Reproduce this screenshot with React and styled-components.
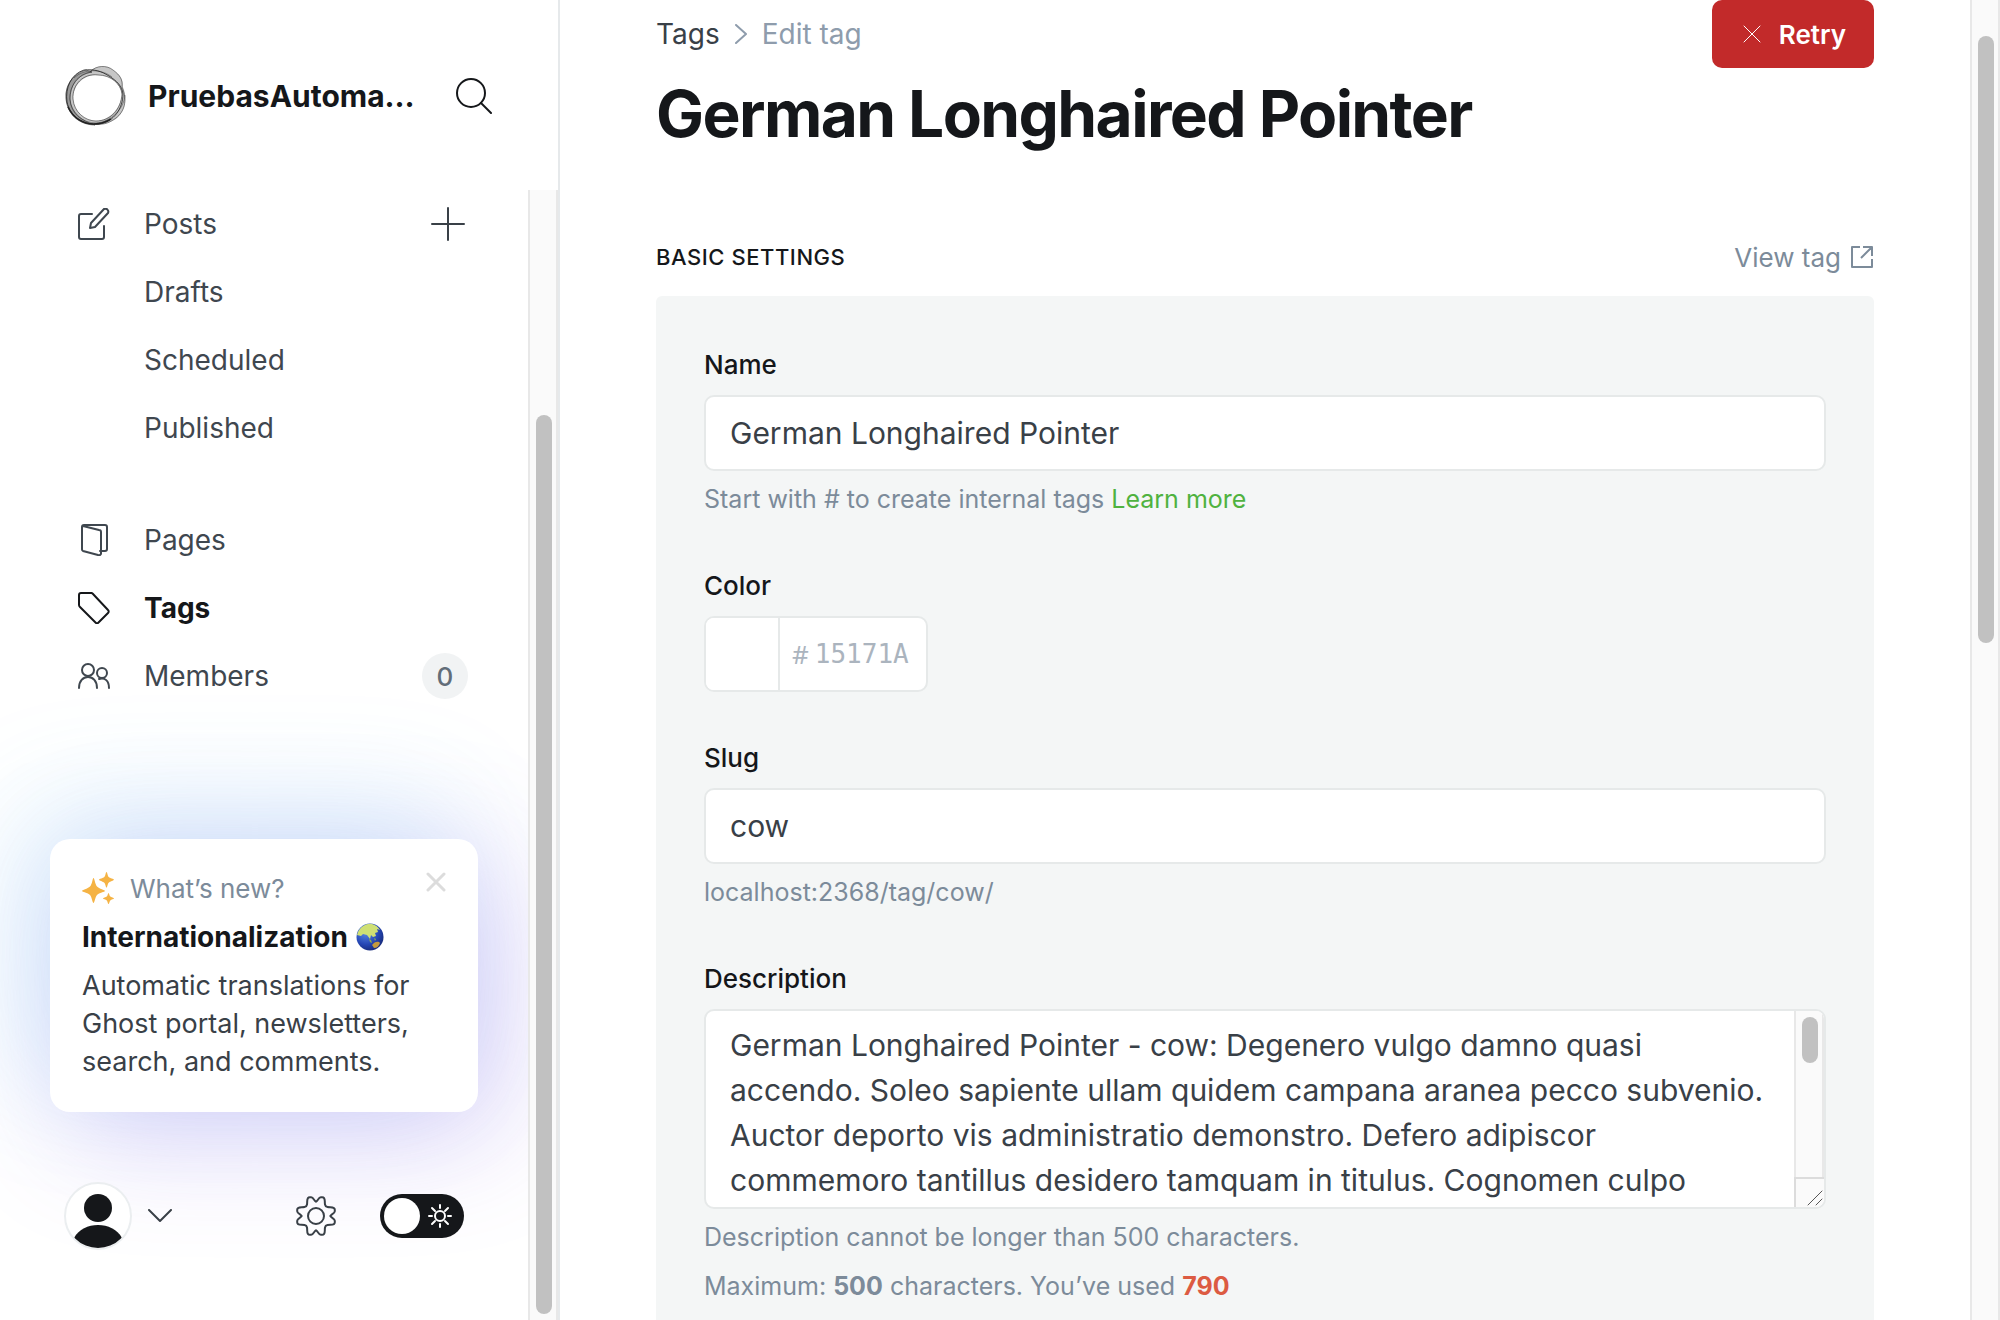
import React, { useState } from 'react';
import styled, { createGlobalStyle, css } from 'styled-components';

const GlobalStyle = createGlobalStyle`
  *, *::before, *::after { box-sizing: border-box; }
  html, body { margin: 0; height: 100%; }
  body {
    background: #fff;
    color: #15171a;
    font-family: Inter, "Liberation Sans", sans-serif;
    font-size: 28px;
    overflow: hidden;
    -webkit-font-smoothing: antialiased;
  }
  button, input, textarea { font-family: inherit; margin: 0; }
  h1, h2, h3, p, ul { margin: 0; padding: 0; }
  ul { list-style: none; }
  a { text-decoration: none; color: inherit; }
`;

const Shell = styled.div`
  display: grid;
  grid-template-columns: 560px minmax(0, 1fr);
  height: 100vh;
`;

/* Scrollbars */
const Track = styled.div`
  flex: none;
  display: flex;
  flex-direction: column;
  align-items: center;
  width: 30px;
  padding-left: 2px;
  background: #fafafa;
  border: solid #e8e8e8;
  border-width: 0 2px;
`;

const Thumb = styled.div`
  width: 16px;
  height: ${(p) => p.$size};
  margin: ${(p) => p.$margin};
  border-radius: 8px;
  background: #c1c1c1;
`;

/* Sidebar */
const Sidebar = styled.aside`
  display: flex;
  flex-direction: column;
  min-height: 0;
  border-right: 2px solid #e6e9eb;
`;

const SiteHeader = styled.header`
  flex: none;
  display: flex;
  align-items: center;
  height: 190px;
  padding: 2px 66px 0 64px;
`;

const SiteName = styled.div`
  flex: 1;
  min-width: 0;
  margin: 0 20px;
  white-space: nowrap;
  font-size: 30px;
  line-height: 40px;
  font-weight: 700;
`;

const IconButton = styled.button`
  display: grid;
  place-items: center;
  padding: 0;
  border: 0;
  background: none;
  color: inherit;
  cursor: pointer;
`;

const SidebarBody = styled.div`
  flex: 1;
  display: flex;
  min-height: 0;
  overflow: hidden;
`;

const SidebarContent = styled.div`
  flex: 1;
  display: flex;
  flex-direction: column;
  min-width: 0;
  overflow: hidden;
  padding-bottom: 70px;
`;

const NavGroup = styled.ul`
  padding: 0 60px 0 78px;
  & + & { margin-top: 44px; }
`;

const NavItem = styled.li`
  display: flex;
  align-items: center;
  justify-content: space-between;
  height: 68px;
`;

const NavLink = styled.a`
  display: flex;
  align-items: center;
  gap: 34px;
  padding-left: ${(p) => (p.$nested ? '66px' : '0')};
  font-size: 28px;
  line-height: 36px;
  color: #3f474f;
  ${(p) => p.$active && css`
    color: #15171a;
    font-weight: 700;
  `}
  svg { flex: none; }
`;

const AddButton = styled(IconButton)`
  width: 40px;
  height: 40px;
  color: #394047;
`;

const Count = styled.span`
  display: grid;
  place-items: center;
  width: 46px;
  height: 46px;
  border-radius: 50%;
  background: #f1f3f4;
  color: #626d79;
  font-size: 26px;
  font-weight: 500;
`;

const NewsCard = styled.section`
  margin: auto 50px 70px;
  padding: 30px 32px 31px;
  border-radius: 20px;
  background: #fff;
  box-shadow:
    -28px -28px 120px rgba(70, 195, 245, 0.18),
    20px 20px 120px rgba(130, 90, 230, 0.3);
`;

const NewsTop = styled.div`
  display: flex;
  align-items: center;
  gap: 16px;
  height: 38px;
  color: #7c8b9a;
  font-size: 26px;
`;

const NewsClose = styled(IconButton)`
  margin: -12px 0 0 auto;
  color: #dcdcdc;
`;

const NewsTitle = styled.h3`
  display: flex;
  align-items: center;
  gap: 8px;
  margin: 10px 0;
  font-size: 28px;
  line-height: 40px;
  font-weight: 700;
`;

const NewsText = styled.p`
  color: #394047;
  font-size: 27px;
  line-height: 38px;
`;

const SidebarFooter = styled.footer`
  flex: none;
  display: flex;
  align-items: center;
  height: 68px;
  padding: 0 64px;
`;

const UserButton = styled(IconButton)`
  grid-auto-flow: column;
  gap: 16px;
  margin-right: auto;
  color: #394047;
`;

const SettingsButton = styled(IconButton)`
  color: #394047;
`;

const Avatar = styled.span`
  display: block;
  width: 68px;
  height: 68px;
  border: 2px solid #ebeef0;
  border-radius: 50%;
  background: #fff;
  overflow: hidden;
`;

const ThemeSwitch = styled.label`
  display: flex;
  align-items: center;
  justify-content: space-between;
  width: 84px;
  height: 44px;
  margin-left: 44px;
  padding: 4px 12px 4px 4px;
  border-radius: 22px;
  background: #15171a;
  cursor: pointer;
`;

const SwitchInput = styled.input`
  appearance: none;
  width: 36px;
  height: 36px;
  border-radius: 50%;
  background: #fff;
  cursor: pointer;
`;

/* Main column */
const MainArea = styled.div`
  display: flex;
  min-width: 0;
  min-height: 0;
  overflow: hidden;
`;

const Main = styled.main`
  flex: 1;
  min-width: 0;
  padding: 0 96px;
`;

const PageHeader = styled.header`
  display: flex;
  align-items: flex-start;
  justify-content: space-between;
`;

const Crumbs = styled.nav`
  display: flex;
  align-items: center;
  gap: 15px;
  height: 68px;
  color: #8e9cac;
  font-size: 28px;
  a { color: #394047; }
`;

const Title = styled.h1`
  margin-top: 6px;
  font-size: 64px;
  line-height: 80px;
  font-weight: 700;
  letter-spacing: -0.025em;
`;

const RetryButton = styled.button`
  display: flex;
  align-items: center;
  gap: 18px;
  height: 68px;
  padding: 0 28px 0 31px;
  border: 0;
  border-radius: 10px;
  background: #c22a2a;
  color: #fff;
  font-size: 26px;
  font-weight: 600;
  cursor: pointer;
`;

const SectionHeader = styled.div`
  display: flex;
  align-items: center;
  justify-content: space-between;
  height: 40px;
  margin: 83px 0 19px;
`;

const SectionTitle = styled.h2`
  font-size: 22px;
  font-weight: 500;
  letter-spacing: 0.025em;
  text-transform: uppercase;
`;

const ViewLink = styled.a`
  display: flex;
  align-items: center;
  gap: 9px;
  color: #7c8b9a;
  font-size: 26px;
`;

const Panel = styled.form`
  padding: 48px;
  border-radius: 6px;
  background: #f4f6f6;
`;

const Field = styled.div`
  & + & { margin-top: 45px; }
`;

const Label = styled.label`
  display: block;
  margin-bottom: 10px;
  font-size: 26px;
  line-height: 41px;
  font-weight: 500;
`;

const boxed = css`
  border: 2px solid #e6e9e9;
  border-radius: 10px;
  background: #fff;
`;

const TextInput = styled.input`
  ${boxed}
  display: block;
  width: 100%;
  height: 76px;
  padding: 0 24px;
  color: #394047;
  font-size: 30px;
  outline: none;
`;

const ColorBox = styled.div`
  ${boxed}
  display: flex;
  width: 224px;
  height: 76px;
  overflow: hidden;
`;

const Swatch = styled.input`
  appearance: none;
  width: 74px;
  height: 100%;
  padding: 0;
  border: 0;
  border-right: 2px solid #e6e9e9;
  background: #fff;
  &::-webkit-color-swatch-wrapper { padding: 0; }
  &::-webkit-color-swatch { border: 0; }
`;

const HexField = styled.div`
  flex: 1;
  display: flex;
  align-items: center;
  gap: 6px;
  min-width: 0;
  padding-left: 12px;
  color: #abb4be;
  font-family: "Noto Sans", "Liberation Sans", sans-serif;
  font-size: 26px;
`;

const HexInput = styled.input`
  flex: 1;
  min-width: 0;
  padding: 0;
  border: 0;
  outline: none;
  background: none;
  color: #394047;
  font-family: "DejaVu Sans Mono", "Liberation Mono", monospace;
  font-size: 26px;
  &::placeholder { color: #abb4be; opacity: 1; }
`;

const AreaBox = styled.div`
  ${boxed}
  display: flex;
  height: 200px;
  overflow: hidden;
`;

const Area = styled.textarea`
  flex: 1;
  min-width: 0;
  padding: 12px 24px 4px;
  border: 0;
  outline: none;
  resize: none;
  overflow: hidden;
  background: none;
  color: #394047;
  font-size: 30px;
  line-height: 45px;
`;

const AreaScroll = styled.div`
  display: flex;
  flex-direction: column;
  width: 30px;
`;

const AreaTrack = styled(Track)`
  flex: 1;
`;

const Resizer = styled.div`
  display: grid;
  place-items: end;
  height: 30px;
  border: solid #dcdcdc;
  border-width: 2px 0 0 2px;
  background: #fafafa;
`;

const Hint = styled.p`
  padding-top: 8px;
  color: #7c8b9a;
  font-size: 25px;
  line-height: 41px;
  a { color: #4fb23f; }
`;

const Over = styled.strong`
  color: #dc5b42;
`;

/* Drawings */
const Icon = ({ w, h = w, box = `0 0 ${w} ${h}`, sw = 2, children, ...rest }) => (
  <svg width={w} height={h} viewBox={box} fill="none" stroke="currentColor" strokeWidth={sw}
    strokeLinecap="round" strokeLinejoin="round" aria-hidden="true" {...rest}>{children}</svg>
);

const Logo = () => (
  <svg width="64" height="64" viewBox="0 0 64 64" fill="none" stroke="#222" aria-hidden="true">
    <path fill="#333" fillOpacity=".28" stroke="none" fillRule="evenodd"
      d="M26 7C32 2 42 0 49 6c8 5 10 10 10 17 5 12 2 25-7 32-8 5-16 6-22 5C16 60 5 51 2 38-1 22 9 8 26 7Zm8 4C20 10 9 21 9 35c1 13 12 22 23 22 14-1 24-12 26-26C57 20 47 11 34 11Z" />
    <path fill="#333" fillOpacity=".3" strokeWidth=".5" fillRule="evenodd"
      d="M22 6C8 10 1 22 2 34c1 16 13 27 29 27C17 57 7 48 6 35 6 22 13 10 28 8Z" />
    <path strokeWidth="1" strokeOpacity=".8" d="M20 6c10-1 17 1 25 6 8 5 13 10 14 18 0 14-9 28-24 30C19 62 6 52 3 38 1 24 7 10 20 6Z" />
    <path strokeWidth=".7" strokeOpacity=".7" d="M26 8C32 1 43 1 49 6c7 5 10 10 9 17 6 14 2 25-6 31-8 6-14 7-22 6" />
    <path strokeWidth=".8" strokeOpacity=".7" d="M34 11C19 9 8 21 9 35c1 13 12 22 23 22 14 0 25-11 26-27C57 20 47 11 34 11Z" />
    <path strokeWidth=".6" strokeOpacity=".7" d="M28 8C14 10 5 22 6 36c1 14 13 23 26 23 15-1 28-14 29-28M10 14c10-10 28-9 38-1" />
    <path strokeWidth="1.6" d="M4 43c5 11 15 17 26 17 7 0 12-2 17-5" />
  </svg>
);

const SearchIcon = () => (
  <Icon w={36} sw={2}><circle cx="15" cy="15" r="14" /><path d="m25 25 10 10" /></Icon>
);

const PostsIcon = () => (
  <Icon w={32}>
    <path d="M14 6H3a2 2 0 0 0-2 2v21a2 2 0 0 0 2 2h21a2 2 0 0 0 2-2V18" />
    <path d="m12 20 1-5L26 1a3 3 0 0 1 4 4L17 19Z" />
  </Icon>
);

const PagesIcon = () => (
  <Icon w={32}>
    <path d="M22 27h5a2 2 0 0 0 2-2V3a2 2 0 0 0-2-2H6a2 2 0 0 0-2 2v22a2 2 0 0 0 1 2l15 4a2 2 0 0 0 3-2V8a2 2 0 0 0-2-2L5 2" />
  </Icon>
);

const TagIcon = () => (
  <Icon w={32}>
    <path d="M1 3a2 2 0 0 1 2-2h10a2 2 0 0 1 2 1l15 16a2 2 0 0 1 0 3L20 31a2 2 0 0 1-2 0L2 15a3 3 0 0 1-1-2Z" />
  </Icon>
);

const MembersIcon = () => (
  <Icon w={32}>
    <circle cx="10" cy="10" r="6" /><path d="M1 28c0-7 4-11 9-11s9 4 9 11" />
    <circle cx="24" cy="13" r="5" /><path d="M21 19c6-2 10 2 10 9" />
  </Icon>
);

const PlusIcon = () => <Icon w={34}><path d="M17 1v32M1 17h32" /></Icon>;

const Sparkles = () => (
  <svg width="32" height="32" viewBox="0 0 32 32" fill="#f5b344" aria-hidden="true">
    <path d="M11.500 6c1 0 1.400 6 3.500 8.500S23 18 23 19s-6 1.500-8 4-2.500 8-3.500 8-1.500-5.500-3.500-8S0 20 0 19s5.500-2 8-4.500S10.500 6 11.500 6Z" />
    <path d="M24.500 0c.8 0 1 3.700 2.200 5s5.300 1.900 5.300 2.700-4 1.600-5.300 3-1.400 4.800-2.200 4.800-1-3.600-2.200-4.800S17 8.500 17 7.700 21 6.200 22.300 5 23.700 0 24.500 0Z" />
    <path d="M26.500 21c.6 0 .9 2.700 1.800 3.600s3.700 1.200 3.700 1.900-2.800 1-3.700 1.900-1.200 3.600-1.800 3.600-.8-2.700-1.700-3.600S21 27.200 21 26.500s2.900-1 3.800-1.900 1.100-3.600 1.700-3.600Z" />
  </svg>
);

const Globe = () => (
  <svg width="28" height="28" viewBox="0 0 28 28" role="img" aria-label="globe">
    <defs>
      <radialGradient id="sea" cx=".35" cy=".3" r=".8">
        <stop offset="0" stopColor="#5d8ee8" /><stop offset=".6" stopColor="#2546b4" /><stop offset="1" stopColor="#14256e" />
      </radialGradient>
    </defs>
    <circle cx="14" cy="14" r="13.500" fill="url(#sea)" />
    <path fill="#cfe074" d="M2 9C5 3 11 0 16 1c4 1 6 3 8 6l-3-1 1 3-3 1 1 3-3 1-2-2-1 4-3-4-4-1-2 2-4-1Z" />
    <path fill="#8cae4f" d="m13 16 2 1 1 3-2-1ZM18 15l2 1-1 2Z" />
    <path fill="#c39a3e" d="M16 22c2-3 5-4 7-3l1 1c-1 3-3 5-6 5Z" />
  </svg>
);

const GearIcon = () => (
  <Icon w={40}>
    <circle cx="20" cy="20" r="8" />
    {[0, 90, 180, 270].map((angle) => (
      <path key={angle} transform={`rotate(${angle} 20 20)`}
        d="M20 5.500C18.400 5.500 17.600 1.200 15.200 1.200H13.800C10.200 1.200 11.600 5 11 8.500 10.700 10.300 10.300 10.700 8.500 11 5 11.600 1.200 10.200 1.200 13.800V15.200C1.200 17.600 5.500 18.400 5.500 20" />
    ))}
  </Icon>
);

const SunIcon = () => (
  <Icon w={24} color="#fff" sw={2}>
    <circle cx="12" cy="12" r="5" />
    <path d="M12 1v3M12 20v3M1 12h3M20 12h3M4 4l3 3M17 17l3 3M4 20l3-3M17 7l3-3" />
  </Icon>
);

const Person = () => (
  <svg width="64" height="64" viewBox="0 0 64 64" fill="#15171a" aria-hidden="true">
    <circle cx="32" cy="24" r="14" />
    <path d="M8 54c5-9 14-13 24-13s19 4 24 13c-6 7-14 11-24 11S14 61 8 54Z" />
  </svg>
);

const primaryNav = [
  { label: 'Posts', icon: PostsIcon, add: true },
  { label: 'Drafts', nested: true },
  { label: 'Scheduled', nested: true },
  { label: 'Published', nested: true },
];

const secondaryNav = [
  { label: 'Pages', icon: PagesIcon },
  { label: 'Tags', icon: TagIcon, active: true },
  { label: 'Members', icon: MembersIcon, count: 0 },
];

const NavList = ({ items }) => (
  <NavGroup>
    {items.map(({ label, icon: Glyph, nested, active, add, count }) => (
      <NavItem key={label}>
        <NavLink href="#" $nested={nested} $active={active}>
          {Glyph && <Glyph />}
          {label}
        </NavLink>
        {add && <AddButton type="button" aria-label="New post"><PlusIcon /></AddButton>}
        {count !== undefined && <Count>{count}</Count>}
      </NavItem>
    ))}
  </NavGroup>
);

const DESCRIPTION =
  'German Longhaired Pointer - cow: Degenero vulgo damno quasi accendo. Soleo sapiente ullam quidem campana aranea pecco subvenio. Auctor deporto vis administratio demonstro. Defero adipiscor commemoro tantillus desidero tamquam in titulus. Cognomen culpo';

export default function App() {
  const [name, setName] = useState('German Longhaired Pointer');
  const [slug, setSlug] = useState('cow');
  const [description, setDescription] = useState(DESCRIPTION);

  return (
    <>
      <GlobalStyle />
      <Shell>
        <Sidebar>
          <SiteHeader>
            <Logo />
            <SiteName>PruebasAutoma…</SiteName>
            <IconButton type="button" aria-label="Search"><SearchIcon /></IconButton>
          </SiteHeader>
          <SidebarBody>
            <SidebarContent>
              <nav>
                <NavList items={primaryNav} />
                <NavList items={secondaryNav} />
              </nav>
              <NewsCard>
                <NewsTop>
                  <Sparkles />
                  What’s new?
                  <NewsClose type="button" aria-label="Dismiss">
                    <Icon w={20} sw={3}><path d="m2 2 16 16M18 2 2 18" /></Icon>
                  </NewsClose>
                </NewsTop>
                <NewsTitle>Internationalization <Globe /></NewsTitle>
                <NewsText>Automatic translations for Ghost portal, newsletters, search, and comments.</NewsText>
              </NewsCard>
              <SidebarFooter>
                <UserButton type="button" aria-label="Account menu">
                  <Avatar><Person /></Avatar>
                  <Icon w={24} h={14}><path d="m1 1 11 11L23 1" /></Icon>
                </UserButton>
                <SettingsButton type="button" aria-label="Settings"><GearIcon /></SettingsButton>
                <ThemeSwitch>
                  <SwitchInput type="checkbox" aria-label="Dark mode" />
                  <SunIcon />
                </ThemeSwitch>
              </SidebarFooter>
            </SidebarContent>
            <Track><Thumb $size="899px" $margin="auto 0 6px" /></Track>
          </SidebarBody>
        </Sidebar>

        <MainArea>
          <Main>
            <PageHeader>
              <div>
                <Crumbs aria-label="Breadcrumb">
                  <a href="#">Tags</a>
                  <Icon w={12} h={20} sw={2}><path d="m1 1 10 9-10 9" /></Icon>
                  <span>Edit tag</span>
                </Crumbs>
                <Title>German Longhaired Pointer</Title>
              </div>
              <RetryButton type="button">
                <Icon w={18} sw={1}><path d="m1 1 16 16M17 1 1 17" /></Icon>
                Retry
              </RetryButton>
            </PageHeader>

            <SectionHeader>
              <SectionTitle>Basic settings</SectionTitle>
              <ViewLink href="#">
                View tag
                <Icon w={24} strokeLinecap="butt"><path d="M10 2H2v20h20v-8M13 2h9v9M22 2 11 13" /></Icon>
              </ViewLink>
            </SectionHeader>

            <Panel onSubmit={(e) => e.preventDefault()}>
              <Field>
                <Label htmlFor="tag-name">Name</Label>
                <TextInput id="tag-name" value={name} onChange={(e) => setName(e.target.value)} />
                <Hint>Start with # to create internal tags <a href="#">Learn more</a></Hint>
              </Field>
              <Field>
                <Label htmlFor="tag-color">Color</Label>
                <ColorBox>
                  <Swatch type="color" aria-label="Pick a color" defaultValue="#ffffff" />
                  <HexField>
                    <span>#</span>
                    <HexInput id="tag-color" placeholder="15171A" />
                  </HexField>
                </ColorBox>
              </Field>
              <Field>
                <Label htmlFor="tag-slug">Slug</Label>
                <TextInput id="tag-slug" value={slug} onChange={(e) => setSlug(e.target.value)} />
                <Hint>localhost:2368/tag/cow/</Hint>
              </Field>
              <Field>
                <Label htmlFor="tag-description">Description</Label>
                <AreaBox>
                  <Area id="tag-description" value={description} onChange={(e) => setDescription(e.target.value)} />
                  <AreaScroll>
                    <AreaTrack><Thumb $size="46px" $margin="6px 0 0" /></AreaTrack>
                    <Resizer>
                      <Icon w={18} sw={1} color="#555"><path d="M2 16 16 2M10 16l6-6" /></Icon>
                    </Resizer>
                  </AreaScroll>
                </AreaBox>
                <Hint>Description cannot be longer than 500 characters.</Hint>
                <Hint>Maximum: <strong>500</strong> characters. You’ve used <Over>790</Over></Hint>
              </Field>
            </Panel>
          </Main>
          <Track><Thumb $size="46%" $margin="36px 0 0" /></Track>
        </MainArea>
      </Shell>
    </>
  );
}
